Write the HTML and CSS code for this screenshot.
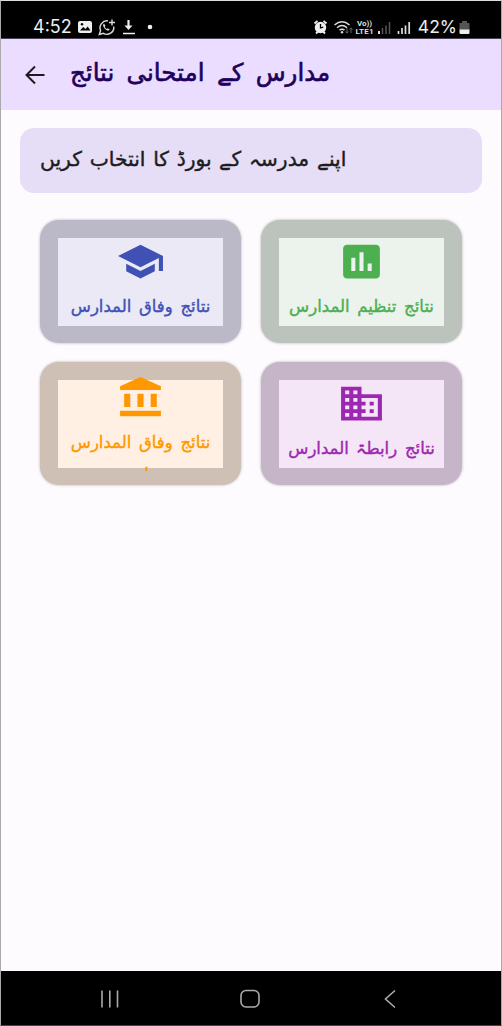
FILE: index.html
```html
<!DOCTYPE html>
<html lang="ur">
<head>
    <meta charset="UTF-8">
    <title>مدارس کے امتحانی نتائج</title>
    <link rel="stylesheet" href="styles.css">
</head>
<body>
    <div class="phone">
        <div class="status-bar">
            <span class="clock">4:52</span>
            <svg class="status-left" width="80" height="20" viewBox="0 0 80 20">
                <rect x="1" y="4" width="14" height="12" rx="2" fill="#eee"/>
                <path d="M3 13.5l3.2-3.6 2.3 2.1 2.2-2.6 2.8 4.1z" fill="#000"/>
                <circle cx="5" cy="7.2" r="1.2" fill="#000"/>
                <path d="M31 3.9A7 7 0 0 0 23.6 13.6L22.3 17.4L26.3 16.3A7 7 0 0 0 36.8 9.5" fill="none" stroke="#ddd" stroke-width="1.4"/>
                <path d="M27 6.5c-1.6 1-1 3 .6 4.9c1.7 1.9 4 2.9 5.3 1.3l-2.1-1.5-1.1.8c-1-.5-1.7-1.3-2-2.2l.8-.9z" fill="#ddd"/>
                <path d="M35 2.5v6M32 5.5h6" stroke="#ddd" stroke-width="1.4"/>
                <path d="M51.5 3v8" stroke="#eee" stroke-width="2.2"/>
                <path d="M47.5 8.5h8l-4 4.5z" fill="#eee"/>
                <path d="M46 16.5h12" stroke="#eee" stroke-width="1.5"/>
                <circle cx="73" cy="10" r="2.3" fill="#eee"/>
            </svg>
            <svg class="status-right" width="100" height="20" viewBox="0 0 100 20">
                <circle cx="7.5" cy="10.5" r="5.7" fill="#eee"/>
                <path d="M1.5 6.5l3-2.5M13.5 6.5l-3-2.5M3 16.5l2-2M12 16.5l-2-2" stroke="#eee" stroke-width="1.8"/>
                <path d="M7.5 7v4l2.7-.8" fill="none" stroke="#000" stroke-width="1.3"/>
                <g fill="none" stroke="#ddd" stroke-width="1.5">
                    <path d="M21.5 8q7.500-6.500 15 0"/>
                    <path d="M24 10.7q5-4.3 10 0"/>
                    <path d="M26.5 13.2q2.5-2 5 0"/>
                </g>
                <circle cx="29" cy="15.3" r="1.2" fill="#ddd"/>
                <path d="M34 11v5M32.5 14.5l1.5 1.7 1.5-1.7M38 16v-5M36.5 12.5l1.5-1.7 1.5 1.7" fill="none" stroke="#666" stroke-width="1"/>
                <text x="44" y="9.3" class="volte" textLength="15">Vo))</text>
                <text x="42.5" y="17" class="volte" textLength="18">LTE1</text>
                <path d="M66 14v3" stroke="#ddd" stroke-width="2"/>
                <path d="M69.5 11v6M73 8.5v8.5M76.5 5v12" stroke="#555" stroke-width="1.5"/>
                <path d="M85.5 14v3M89 11v6M92.5 8.5v8.5M96.2 5v12" stroke="#ddd" stroke-width="1.7"/>
            </svg>
            <span class="percent">42%</span>
            <svg class="battery" width="11" height="14" viewBox="0 0 11 14">
                <path d="M3 0h5v2h2.5v7H.5V2H3z" fill="#555"/>
                <path d="M.5 8.5h10V12q0 1-1 1h-8q-1 0-1-1z" fill="#eee"/>
            </svg>
        </div>

        <header class="app-bar">
            <svg class="back" width="20" height="20" viewBox="0 0 20 20">
                <path d="M19.5 10H2M10 1.5L1.5 10l8.5 8.5" fill="none" stroke="#1d1b20" stroke-width="2"/>
            </svg>
            <h1 class="title" dir="rtl">مدارس کے امتحانی نتائج</h1>
        </header>

        <main class="content">
            <div class="banner"><span class="banner-text" dir="rtl">اپنے مدرسہ کے بورڈ کا انتخاب کریں</span></div>

            <div class="grid">
                <div class="card indigo">
                    <div class="panel">
                        <svg class="icon" viewBox="0 0 24 24" preserveAspectRatio="none"><path d="M5 13.18v4L12 21l7-3.82v-4L12 17l-7-3.82zM12 3L1 9l11 6 9-4.91V17h2V9L12 3z"/></svg>
                        <span class="label" dir="rtl">نتائج وفاق المدارس</span>
                    </div>
                </div>
                <div class="card green">
                    <div class="panel">
                        <svg class="icon" viewBox="0 0 24 24" preserveAspectRatio="none"><path d="M19 3H5c-1.1 0-2 .9-2 2v14c0 1.1.9 2 2 2h14c1.1 0 2-.9 2-2V5c0-1.1-.9-2-2-2zM9 17H7v-7h2v7zm4 0h-2V7h2v10zm4 0h-2v-4h2v4z"/></svg>
                        <span class="label" dir="rtl">نتائج تنظیم المدارس</span>
                    </div>
                </div>
                <div class="card orange">
                    <div class="panel tall">
                        <svg class="icon" viewBox="0 0 24 24" preserveAspectRatio="none"><path d="M4 10h3v7H4zM10.5 10h3v7h-3zM17 10h3v7h-3zM2 19h20v3H2zM12 1L2 6v2h20V6z"/></svg>
                        <span class="label" dir="rtl">نتائج وفاق المدارس<br>ان</span>
                    </div>
                </div>
                <div class="card purple">
                    <div class="panel">
                        <svg class="icon" viewBox="0 0 24 24" preserveAspectRatio="none"><path d="M12 7V3H2v18h20V7H12zM6 19H4v-2h2v2zm0-4H4v-2h2v2zm0-4H4V9h2v2zm0-4H4V5h2v2zm4 12H8v-2h2v2zm0-4H8v-2h2v2zm0-4H8V9h2v2zm0-4H8V5h2v2zm10 12h-8v-2h2v-2h-2v-2h2v-2h-2V9h8v10zm-2-8h-2v2h2v-2zm0 4h-2v2h2v-2z"/></svg>
                        <span class="label" dir="rtl">نتائج رابطۃ المدارس</span>
                    </div>
                </div>
            </div>
        </main>

        <nav class="nav-bar">
            <svg width="20" height="20" viewBox="0 0 20 20"><path d="M2 1.5v17M9.8 1.5v17M17.5 1.5v17"/></svg>
            <svg width="20" height="20" viewBox="0 0 20 20"><rect x="1" y="1.5" width="18" height="16.5" rx="5"/></svg>
            <svg width="20" height="20" viewBox="0 0 20 20"><path d="M15 1.5L5.5 10l9.5 8.5"/></svg>
        </nav>
    </div>
</body>
</html>
```

FILE: styles.css
```css
body {
    margin: 0;
    background: #fefbff;
    font-family: "DejaVu Sans", sans-serif;
}
.phone {
    box-sizing: border-box;
    height: 1026px;
    border: 1px solid #aaa;
    border-top-color: #ddd;
    border-bottom-color: #444;
    display: flex;
    flex-direction: column;
}
.status-bar {
    height: 38px;
    box-sizing: border-box;
    padding: 16px 31px 0 32px;
    display: flex;
    align-items: flex-start;
    background: #000;
    border-bottom: 1px solid #4a4055;
    color: #eee;
    font-family: Inter, Roboto, sans-serif;
    font-size: 18px;
    line-height: 20px;
}
.clock {
    width: 44px;
}
.status-right {
    margin-left: auto;
    margin-right: 5px;
}
.volte {
    font-family: Roboto, sans-serif;
    font-size: 8px;
    font-weight: bold;
    fill: #ddd;
}
.percent {
    font-size: 17.5px;
}
.battery {
    margin-top: 4px;
    margin-left: 2px;
}
.app-bar {
    height: 71px;
    box-sizing: border-box;
    padding: 0 24px;
    display: flex;
    align-items: center;
    gap: 25px;
    background: #eaddff;
}
.title {
    margin: 0 0 5px;
    color: #21005d;
    font-size: 24.5px;
    font-weight: normal;
    word-spacing: 4.5px;
    white-space: nowrap;
    -webkit-text-stroke: 0.6px;
}
.content {
    flex: 1;
    padding: 18px 19px 0;
}
.banner {
    height: 65px;
    box-sizing: border-box;
    padding: 0 20px 3px;
    border-radius: 14px;
    display: flex;
    align-items: center;
    background: #e6def6;
    color: #1d1b20;
    font-size: 20.3px;
    word-spacing: 1.3px;
    white-space: nowrap;
    -webkit-text-stroke: 0.4px;
}
.grid {
    display: grid;
    grid-template-columns: 201px 201px;
    gap: 19px 20px;
    justify-content: center;
    margin-top: 27px;
}
.card {
    height: 123px;
    box-sizing: border-box;
    padding: 18px;
    border-radius: 19px;
    box-shadow: 0 0 3px rgba(0, 0, 0, 0.3);
}
.panel {
    height: 88px;
    display: flex;
    flex-direction: column;
    align-items: center;
}
.icon {
    width: 49px;
    height: 45px;
    flex: none;
    margin-top: 1px;
    fill: currentColor;
}
.label {
    margin-top: 7px;
    font-size: 16.5px;
    line-height: 32px;
    word-spacing: 2.5px;
    text-align: center;
    white-space: nowrap;
    -webkit-text-stroke: 0.4px;
}
.tall .icon {
    margin-top: -5px;
}
/* the second line does not fit, only its top shows */
.tall .label {
    height: 44px;
    flex: none;
    overflow: hidden;
}
.indigo {
    background: #bbb9c8;
    color: #3f51b5;
}
.indigo .panel {
    background: #eae9f5;
}
.green {
    background: #bcc3bc;
    color: #4caf50;
}
.green .panel {
    background: #ecf2ec;
}
.orange {
    background: #cec0b4;
    color: #ff9800;
}
.orange .panel {
    background: #fff0e3;
}
.purple {
    background: #c6b5c9;
    color: #9c27b0;
}
.purple .panel {
    background: #f5e6f7;
}
.nav-bar {
    height: 54px;
    box-sizing: border-box;
    display: flex;
    align-items: center;
    justify-content: space-between;
    padding: 2px 101px 0 99px;
    background: #000;
}
.nav-bar svg {
    fill: none;
    stroke: #aaa;
    stroke-width: 1.6;
}
```
